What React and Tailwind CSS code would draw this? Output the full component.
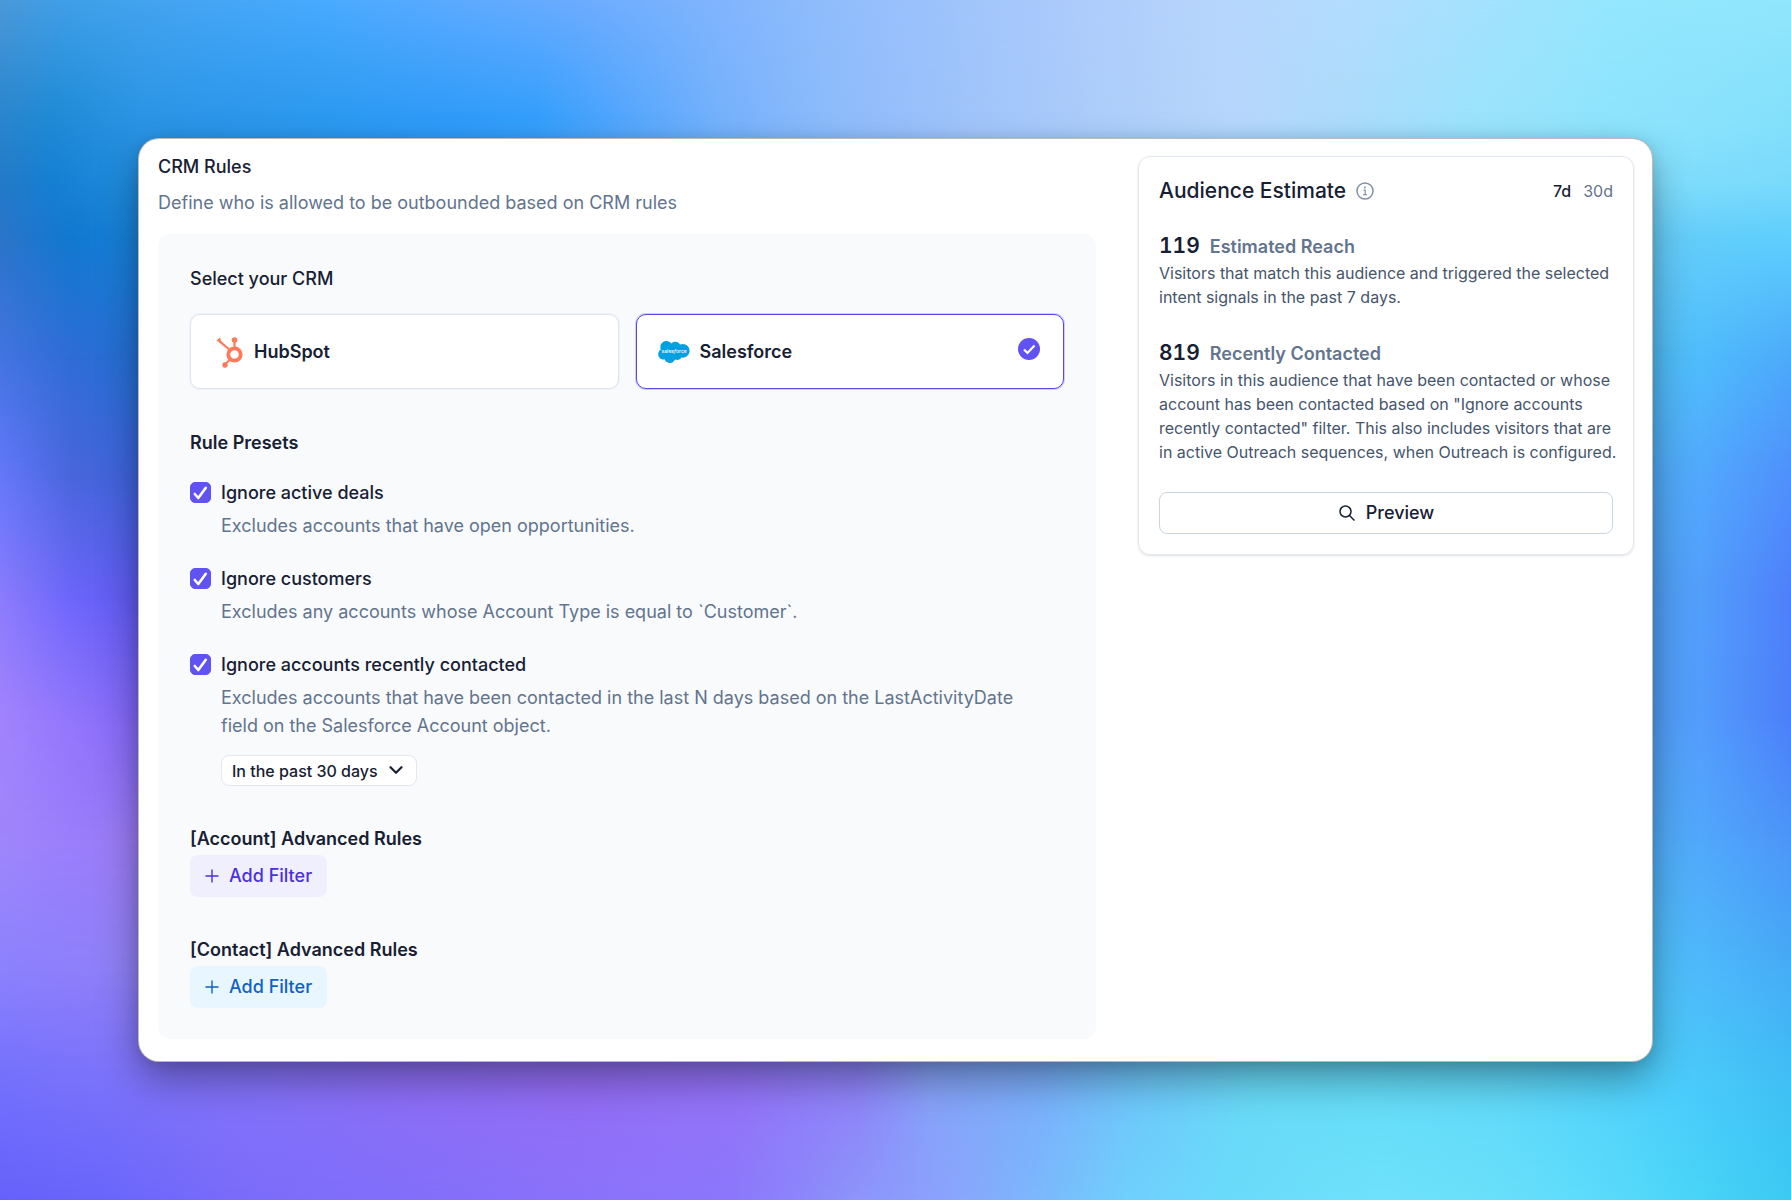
import { ChevronDown } from "lucide-react";

// Colour rows of the backdrop: y in percent, then [x in percent, colour] stops.
const BACKDROP = [
  { y: 0, stops: [[0, "#4a98d8"], [4, "#3f9fe8"], [11, "#45a5f4"], [18, "#48aafd"], [25, "#5aaaff"], [32, "#6aabff"], [39, "#7db3fd"], [46, "#8fbcfc"], [54, "#a0c4fb"], [61, "#aeccfb"], [68, "#b6d5fc"], [75, "#b3dcfd"], [82, "#a5e1fd"], [90, "#93e6fe"], [100, "#90e6fc"]] },
  { y: 10, stops: [[0, "#2a85cc"], [3, "#1f8ad6"], [8, "#2b94e4"], [18, "#2b99f0"], [25, "#2e9bf9"], [30, "#339ffc"], [34, "#4ea5fd"], [40, "#74b1fc"], [46, "#8cbbfb"], [54, "#a0c4fb"], [61, "#accdfa"], [69, "#b7d7fc"], [75, "#addcfb"], [82, "#9ce3fc"], [90, "#8fe4fd"], [100, "#83e0fb"]] },
  { y: 15, stops: [[0, "#247ac8"], [3, "#1580d2"], [8, "#228edf"], [25, "#2e9bf9"], [54, "#a0c4fb"], [91, "#82dffc"], [100, "#7bdafb"]] },
  { y: 20, stops: [[0, "#2b74c8"], [4, "#1178d0"], [9, "#1a84da"], [92, "#66ccf8"], [100, "#5dcefd"]] },
  { y: 30, stops: [[0, "#4474e2"], [4, "#2f6cd6"], [9, "#2070d2"], [92, "#50bdf5"], [95, "#4fbcfc"], [100, "#4ca9fa"]] },
  { y: 40, stops: [[0, "#6678fb"], [4, "#4a66dc"], [9, "#3a62da"], [92, "#50aaf5"], [95, "#52a8fc"], [100, "#4f8ffc"]] },
  { y: 50, stops: [[0, "#8c7cfd"], [4, "#6d66fb"], [9, "#5a55ec"], [92, "#50a0f5"], [95, "#529efb"], [100, "#4f7ffb"]] },
  { y: 60, stops: [[0, "#a283fc"], [4, "#9276fc"], [9, "#7d62f6"], [92, "#529ff8"], [95, "#539dfc"], [100, "#4c7ffa"]] },
  { y: 70, stops: [[0, "#9f86fb"], [4, "#9a7efb"], [9, "#9a78f0"], [92, "#52aef8"], [95, "#51a8fb"], [100, "#4c95f8"]] },
  { y: 80, stops: [[0, "#8d83fd"], [4, "#9080fb"], [9, "#9080f0"], [92, "#4fc0f8"], [95, "#4fb8fb"], [100, "#46aaf6"]] },
  { y: 90, stops: [[0, "#7470fc"], [6, "#7a72fb"], [13, "#8272f8"], [22, "#8c6ef6"], [32, "#946cf4"], [41, "#9472f8"], [48, "#8e82f8"], [52, "#86a2f8"], [58, "#7aaefa"], [63, "#6ec4fa"], [70, "#68daf6"], [77, "#64dcf8"], [84, "#60d8f8"], [92, "#4ecffc"], [100, "#40bff5"]] },
  { y: 100, stops: [[0, "#6661fb"], [6, "#6a66fb"], [13, "#7a6cfb"], [22, "#826ffa"], [32, "#8a72fb"], [41, "#8c78fc"], [45, "#8c88fb"], [48, "#8d95fb"], [53, "#8aa4fd"], [58, "#7cb8fc"], [63, "#70d0fd"], [69, "#6adcfb"], [77, "#6ee2fc"], [83, "#6ae0fb"], [89, "#5cdcfb"], [95, "#48d4f8"], [100, "#3bcaf2"]] },
];

function Backdrop() {
  const layers = BACKDROP.map((row, i) => {
    const next = BACKDROP[i + 1];
    const style = {
      zIndex: BACKDROP.length - i,
      backgroundImage: `linear-gradient(to right, ${row.stops.map(([x, c]) => `${c} ${x}%`).join(", ")})`,
    };
    if (next) style.maskImage = `linear-gradient(to bottom, #000 ${row.y}%, transparent ${next.y}%)`;
    return <div key={row.y} className="absolute inset-0" style={style} />;
  });
  return (
    <div className="absolute inset-0 isolate -z-10" aria-hidden="true">
      {layers}
    </div>
  );
}

function HubSpotIcon() {
  return (
    <svg viewBox="0 0 28 32" className="h-8 w-7 shrink-0" fill="none" stroke="#ff7a59" aria-hidden="true">
      <circle cx="18.500" cy="18.500" r="6.200" strokeWidth="3.800" />
      <path d="M18.500 12V5" strokeWidth="2.200" />
      <path d="M14 14L3 4.800" strokeWidth="2.200" />
      <path d="M14 23.500L9 28.500" strokeWidth="2.200" />
      <circle cx="18.500" cy="4" r="2.800" fill="#ff7a59" stroke="none" />
      <path d="M0.300 4.500L4.100 1.600 5.500 6.500 2 5.600z" fill="#ff7a59" stroke="none" />
      <circle cx="9" cy="29" r="2.700" fill="#ff7a59" stroke="none" />
    </svg>
  );
}

function SalesforceIcon() {
  return (
    <svg viewBox="0 0 273 191" className="h-[22px] w-8 shrink-0" aria-hidden="true">
      <path
        fill="#00a1e0"
        d="M113 21.3c8.800-9.100 21-14.800 34.500-14.800 18 0 33.600 10 42 24.900a58 58 0 0 1 23.700-5.100c32.400 0 58.700 26.500 58.700 59.200s-26.300 59.200-58.700 59.200c-3.960 0-7.820-0.398-11.600-1.150-7.350 13.100-21.400 22-37.400 22a42.700 42.700 0 0 1-18.800-4.320c-7.450 17.500-24.800 29.800-45 29.800-21.100 0-39-13.300-45.900-32a45.100 45.100 0 0 1-9.340 0.972c-25.100 0-45.400-20.600-45.400-45.900 0-17 9.140-31.800 22.700-39.800a52.600 52.600 0 0 1-4.350-21c0-29.200 23.700-52.800 52.900-52.800 17.100 0 32.400 8.150 42 20.800"
      />
      <text x="138" y="106" textAnchor="middle" fill="#fff" fontSize="44" fontWeight="500" fontFamily="Inter, sans-serif">
        sales
        <tspan fontStyle="italic">f</tspan>
        orce
      </text>
    </svg>
  );
}

function CrmOption({ name, icon, checked }) {
  return (
    <label
      className={
        checked
          ? "flex h-[75px] cursor-pointer items-center rounded-[10px] border border-[#5648ee] bg-white px-[21px] ring-1 ring-[#5648ee]/25"
          : "flex h-[75px] cursor-pointer items-center rounded-[10px] border border-[#dfe5f0] bg-white px-[25px] ring-1 ring-[#dfe5f0]/35"
      }
    >
      <input type="radio" name="crm" defaultChecked={checked} className="sr-only" />
      {icon}
      <span className="ml-2.5 text-lg font-semibold">{name}</span>
      {checked && (
        <svg viewBox="0 0 22 22" className="mr-0.5 mb-1.5 ml-auto size-[22px]" fill="none" stroke="#fff" strokeWidth="2.200" aria-hidden="true">
          <circle cx="11" cy="11" r="11" fill="#6152f3" stroke="none" />
          <path d="M6 11.500l3.500 3.500L16.500 7.500" />
        </svg>
      )}
    </label>
  );
}

function Preset({ id, title, children, extra }) {
  return (
    <div className="flex gap-2.5 pr-7">
      <span className="relative mt-[3px] size-[21px] shrink-0">
        <input
          id={id}
          type="checkbox"
          defaultChecked
          className="peer block size-[21px] appearance-none rounded-[5px] border border-slate-300 bg-white checked:border-[#6152f3] checked:bg-[#6152f3]"
        />
        <svg
          viewBox="0 0 21 21"
          className="pointer-events-none absolute inset-0 hidden size-[21px] peer-checked:block"
          fill="none"
          stroke="#fff"
          strokeWidth="2.600"
          strokeLinecap="round"
          strokeLinejoin="round"
          aria-hidden="true"
        >
          <path d="M4.800 12l3.500 4L15.800 5.800" />
        </svg>
      </span>
      <div>
        <label htmlFor={id} className="block text-lg leading-7 font-medium">
          {title}
        </label>
        <p className="mt-[5px] text-lg leading-7 text-slate-500">{children}</p>
        {extra}
      </div>
    </div>
  );
}

function PlusIcon() {
  return (
    <svg viewBox="0 0 14 14" className="size-3.5" fill="none" stroke="currentColor" strokeWidth="1.400" aria-hidden="true">
      <path d="M7 0.500v13M0.500 7h13" />
    </svg>
  );
}

function Metric({ value, label, children }) {
  return (
    <div>
      <h3 className="flex items-baseline gap-2.5 leading-7">
        <span className="text-[21px] font-semibold tabular-nums">{value}</span>
        <span className="text-lg leading-7 font-semibold text-slate-500">{label}</span>
      </h3>
      <p className="-mr-2 leading-6 text-slate-600">{children}</p>
    </div>
  );
}

export default function App() {
  return (
    <div className="relative isolate flex min-h-screen items-center justify-center p-[139px] font-[Inter,sans-serif] text-[#172033]">
      <Backdrop />
      <main className="flex w-full items-start gap-[42px] rounded-[20px] bg-white pt-[14px] pr-[18px] pb-[22px] pl-[19px] shadow-[0_0_0_1px_#bdb9b6,0_18px_40px_rgba(0,0,0,0.36),0_2px_14px_rgba(0,0,0,0.12)]">
        <section className="flex-1">
          <h1 className="text-lg leading-7 font-medium">CRM Rules</h1>
          <p className="mt-2 text-lg leading-7 text-slate-500">
            Define who is allowed to be outbounded based on CRM rules
          </p>
          <div className="mt-[17px] rounded-xl bg-slate-50 px-8 py-[31px]">
            <h2 className="text-lg leading-7 font-medium">Select your CRM</h2>
            <div className="mt-[21px] grid grid-cols-2 gap-[17px]">
              <CrmOption name="HubSpot" icon={<HubSpotIcon />} />
              <CrmOption name="Salesforce" icon={<SalesforceIcon />} checked />
            </div>
            <h2 className="mt-10 text-lg leading-7 font-semibold">Rule Presets</h2>
            <div className="mt-[22px] flex flex-col gap-[25px]">
              <Preset id="deals" title="Ignore active deals">
                Excludes accounts that have open opportunities.
              </Preset>
              <Preset id="customers" title="Ignore customers">
                Excludes any accounts whose Account Type is equal to `Customer`.
              </Preset>
              <Preset
                id="recent"
                title="Ignore accounts recently contacted"
                extra={
                  <div className="relative mt-[15px] w-[196px]">
                    <select
                      aria-label="Contacted within"
                      className="block h-[31px] w-full appearance-none rounded-lg border border-slate-200 bg-white pl-2.5 text-base font-medium"
                    >
                      <option>In the past 30 days</option>
                    </select>
                    <ChevronDown className="pointer-events-none absolute top-1 right-2.5 size-[22px]" strokeWidth={2.4} />
                  </div>
                }
              >
                Excludes accounts that have been contacted in the last N days based on the LastActivityDate field on the
                Salesforce Account object.
              </Preset>
            </div>
            <h2 className="mt-[39px] text-lg leading-7 font-semibold">[Account] Advanced Rules</h2>
            <button className="mt-0.5 flex h-[42px] items-center gap-2.5 rounded-lg bg-[#efeffe] px-[15px] text-lg font-medium text-[#4b2fe0]">
              <PlusIcon />
              Add Filter
            </button>
            <h2 className="mt-[39px] text-lg leading-7 font-semibold">[Contact] Advanced Rules</h2>
            <button className="mt-0.5 flex h-[42px] items-center gap-2.5 rounded-lg bg-[#e8f7ff] px-[15px] text-lg font-medium text-[#1060c9]">
              <PlusIcon />
              Add Filter
            </button>
          </div>
        </section>
        <aside className="mt-[3px] w-[496px] shrink-0 rounded-xl border border-slate-200 px-5 py-5 shadow-sm">
          <div className="flex h-7 items-center">
            <h2 className="text-[21px] font-medium">Audience Estimate</h2>
            <svg viewBox="0 0 18 18" className="ml-2.5 size-[18px] text-[#8490a5]" fill="none" stroke="currentColor" strokeWidth="1.500" aria-hidden="true">
              <circle cx="9" cy="9" r="8" />
              <path d="M7.500 8.200h1.700v4.300M7.300 12.600h3.600" strokeWidth="1.200" />
              <circle cx="8.900" cy="5.600" r="1" fill="currentColor" stroke="none" />
            </svg>
            <button className="ml-auto font-medium">7d</button>
            <button className="ml-3 font-normal text-slate-500">30d</button>
          </div>
          <div className="mt-[27px] flex flex-col gap-[30px]">
            <Metric value="119" label="Estimated Reach">
              Visitors that match this audience and triggered the selected intent signals in the past 7 days.
            </Metric>
            <Metric value="819" label="Recently Contacted">
              Visitors in this audience that have been contacted or whose account has been contacted based on "Ignore
              accounts recently contacted" filter. This also includes visitors that are in active Outreach sequences,
              when Outreach is configured.
            </Metric>
          </div>
          <button className="mt-7 flex h-[42px] w-full items-center justify-center gap-2.5 rounded-lg border border-slate-300 text-lg font-medium">
            <svg viewBox="0 0 18 18" className="size-[18px]" fill="none" stroke="currentColor" strokeWidth="1.500" aria-hidden="true">
              <circle cx="7.500" cy="7.500" r="5.500" />
              <path d="M11.500 11.500L16.500 16.500" />
            </svg>
            Preview
          </button>
        </aside>
      </main>
    </div>
  );
}
